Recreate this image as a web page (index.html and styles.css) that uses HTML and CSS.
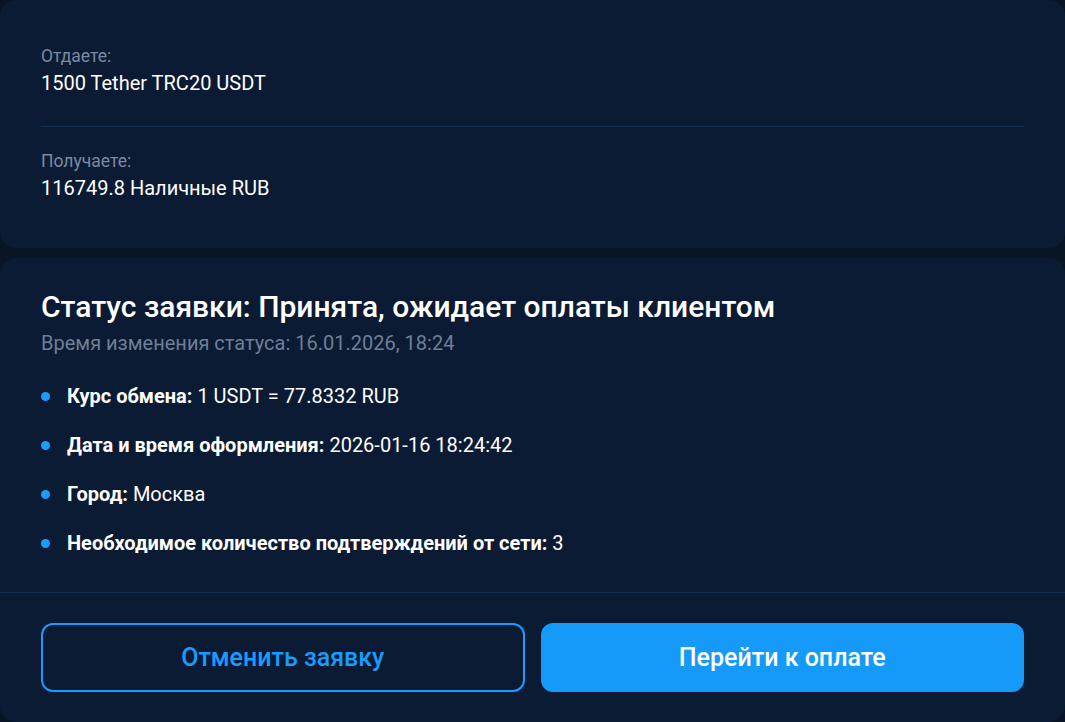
FILE: index.html
```html
<!DOCTYPE html>
<html lang="ru">
<head>
    <meta charset="UTF-8">
    <title>Заявка на обмен</title>
    <link rel="stylesheet" href="styles.css">
</head>
<body>
    <div class="page">
        <div class="card summary">
            <div class="summary-item">
                <div class="summary-label">Отдаете:</div>
                <div class="summary-value">1500 Tether TRC20 USDT</div>
            </div>
            <div class="summary-item">
                <div class="summary-label">Получаете:</div>
                <div class="summary-value">116749.8 Наличные RUB</div>
            </div>
        </div>

        <div class="card status">
            <div class="status-body">
                <h2 class="status-title">Статус заявки: Принята, ожидает оплаты клиентом</h2>
                <div class="status-time">Время изменения статуса: 16.01.2026, 18:24</div>
                <ul class="details">
                    <li><b>Курс обмена:</b>&nbsp;1 USDT = 77.8332 RUB</li>
                    <li><b>Дата и время оформления:</b>&nbsp;2026-01-16 18:24:42</li>
                    <li><b>Город:</b>&nbsp;Москва</li>
                    <li><b>Необходимое количество подтверждений от сети:</b>&nbsp;3</li>
                </ul>
            </div>
            <div class="status-actions">
                <button type="button" class="btn btn-outline">Отменить заявку</button>
                <button type="button" class="btn btn-primary">Перейти к оплате</button>
            </div>
        </div>
    </div>
</body>
</html>
```

FILE: styles.css
```css
body {
    margin: 0;
    padding: 0;
    background-color: #091425;
    font-family: Roboto, "Noto Sans", Arial, sans-serif;
    color: #ffffff;
}
.page {
    display: flex;
    flex-direction: column;
    gap: 10px;
    height: 722px;
    overflow: hidden;
}
.card {
    background-color: #0b1b33;
    border-radius: 16px;
}
.summary {
    padding: 22px 41px 17px;
}
.summary-item {
    padding: 24px 0;
}
.summary-item + .summary-item {
    border-top: 1px solid #10304f;
}
.summary-label {
    font-size: 17.5px;
    line-height: 20px;
    color: #7a8aa1;
    margin-bottom: 5px;
}
.summary-value {
    font-size: 20px;
    line-height: 24px;
    margin-bottom: 7px;
}
.status {
    flex: 1;
    display: flex;
    flex-direction: column;
}
.status-body {
    padding: 31px 41px 0;
    flex: 1;
}
.status-title {
    margin: 0;
    font-size: 30px;
    font-weight: 500;
    line-height: 36px;
}
.status-time {
    font-size: 20px;
    line-height: 24px;
    color: #6f7f96;
    margin-top: 6px;
}
.details {
    list-style: none;
    margin: 17px 0 0;
    padding: 0;
}
.details li {
    display: flex;
    align-items: center;
    font-size: 20px;
    line-height: 25px;
    padding: 12px 0;
}
.details li::before {
    content: "";
    width: 9px;
    height: 9px;
    border-radius: 50%;
    background-color: #1a9bff;
    margin-right: 17px;
    flex-shrink: 0;
}
.details b {
    font-weight: 700;
}
.status-actions {
    display: grid;
    grid-template-columns: 1fr 1fr;
    gap: 16px;
    padding: 30px 41px 30px;
    border-top: 1px solid #10304f;
}
.btn {
    height: 69px;
    border-radius: 12px;
    font-family: inherit;
    font-size: 25px;
    font-weight: 500;
    cursor: pointer;
}
.btn-outline {
    background-color: transparent;
    border: 2px solid #1a9bff;
    color: #1a9bff;
}
.btn-primary {
    background-color: #159afa;
    border: none;
    color: #ffffff;
}
.btn-primary:hover {
    background-color: #0f8ae6;
}
```
